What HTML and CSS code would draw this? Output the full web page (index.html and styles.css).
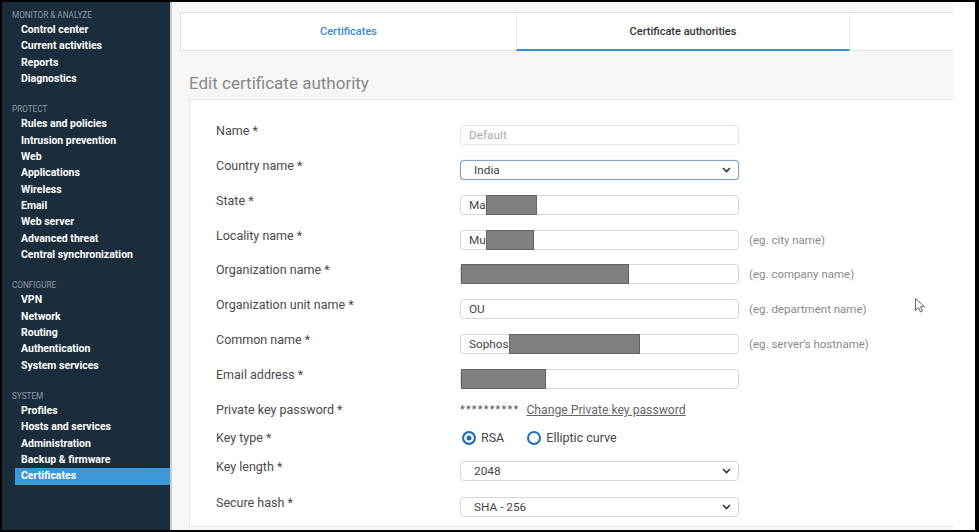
FILE: index.html
```html
<!DOCTYPE html>
<html lang="en">
<head>
<meta charset="utf-8">
<title>Edit certificate authority</title>
<link rel="stylesheet" href="styles.css">
</head>
<body>
<div class="frame">
  <aside class="sidebar">
    <div class="group">
      <div class="group-title">Monitor &amp; Analyze</div>
      <a class="nav-item">Control center</a>
      <a class="nav-item">Current activities</a>
      <a class="nav-item">Reports</a>
      <a class="nav-item">Diagnostics</a>
    </div>
    <div class="group">
      <div class="group-title">Protect</div>
      <a class="nav-item">Rules and policies</a>
      <a class="nav-item">Intrusion prevention</a>
      <a class="nav-item">Web</a>
      <a class="nav-item">Applications</a>
      <a class="nav-item">Wireless</a>
      <a class="nav-item">Email</a>
      <a class="nav-item">Web server</a>
      <a class="nav-item">Advanced threat</a>
      <a class="nav-item">Central synchronization</a>
    </div>
    <div class="group">
      <div class="group-title">Configure</div>
      <a class="nav-item">VPN</a>
      <a class="nav-item">Network</a>
      <a class="nav-item">Routing</a>
      <a class="nav-item">Authentication</a>
      <a class="nav-item">System services</a>
    </div>
    <div class="group">
      <div class="group-title">System</div>
      <a class="nav-item">Profiles</a>
      <a class="nav-item">Hosts and services</a>
      <a class="nav-item">Administration</a>
      <a class="nav-item">Backup &amp; firmware</a>
      <a class="nav-item active">Certificates</a>
    </div>
  </aside>

  <main class="main">
    <nav class="tabs">
      <div class="tab">Certificates</div>
      <div class="tab active">Certificate authorities</div>
      <div class="tab-fill"></div>
    </nav>
    <h1 class="title">Edit certificate authority</h1>
    <section class="panel">
      <div class="row">
        <div class="label">Name *</div>
        <div class="field disabled">Default</div>
      </div>
      <div class="row">
        <div class="label">Country name *</div>
        <div class="field select focus"><span>India</span><svg class="chev" width="9" height="6" viewBox="0 0 9 6"><path d="M1 1l3.5 3.5L8 1" fill="none" stroke="#333" stroke-width="1.6"/></svg></div>
      </div>
      <div class="row">
        <div class="label">State *</div>
        <div class="field"><span>Ma</span><span class="redact" style="width:51px"></span></div>
      </div>
      <div class="row">
        <div class="label">Locality name *</div>
        <div class="field"><span>Mu</span><span class="redact" style="width:48px"></span></div>
        <div class="hint">(eg. city name)</div>
      </div>
      <div class="row">
        <div class="label">Organization name *</div>
        <div class="field flush"><span class="redact" style="width:168px"></span></div>
        <div class="hint">(eg. company name)</div>
      </div>
      <div class="row">
        <div class="label">Organization unit name *</div>
        <div class="field">OU</div>
        <div class="hint">(eg. department name)</div>
      </div>
      <div class="row">
        <div class="label">Common name *</div>
        <div class="field"><span>Sophos</span><span class="redact" style="width:131px"></span></div>
        <div class="hint">(eg. server’s hostname)</div>
      </div>
      <div class="row gap-s">
        <div class="label">Email address *</div>
        <div class="field flush"><span class="redact" style="width:85px"></span></div>
      </div>
      <div class="row text-row gap-xs">
        <div class="label">Private key password *</div>
        <span class="stars">**********</span>
        <a class="link">Change Private key password</a>
      </div>
      <div class="row text-row gap-m">
        <div class="label">Key type *</div>
        <label class="radio"><span class="dot checked"></span>RSA</label>
        <label class="radio"><span class="dot"></span>Elliptic curve</label>
      </div>
      <div class="row gap-l">
        <div class="label">Key length *</div>
        <div class="field select"><span>2048</span><svg class="chev" width="9" height="6" viewBox="0 0 9 6"><path d="M1 1l3.5 3.5L8 1" fill="none" stroke="#333" stroke-width="1.6"/></svg></div>
      </div>
      <div class="row">
        <div class="label">Secure hash *</div>
        <div class="field select"><span>SHA - 256</span><svg class="chev" width="9" height="6" viewBox="0 0 9 6"><path d="M1 1l3.5 3.5L8 1" fill="none" stroke="#333" stroke-width="1.6"/></svg></div>
      </div>
    </section>
  </main>

  <div class="edge"></div>

  <svg class="cursor" width="10" height="15" viewBox="0 0 10 15"><path d="M0.5 0.5v12l3-3 2 4.5 2-1-2-4.3h4z" fill="#fff" stroke="#666" stroke-width="1"/></svg>
</div>
</body>
</html>
```

FILE: styles.css
```css
* { box-sizing: border-box; }

body {
  margin: 0;
  background: #000;
  font-family: Roboto, "Liberation Sans", Arial, sans-serif;
}

.frame {
  position: relative;
  display: flex;
  width: 973px;
  height: 528px;
  margin: 2px 4px 2px 2px;
  overflow: hidden;
  background: #fff;
}

/* Sidebar */
.sidebar {
  flex: none;
  width: 170px;
  padding-top: 6px;
  background: #1b2d3b;
  border-right: 2px solid #c7ced3;
}

.group { margin-bottom: 15px; }

.group-title {
  padding-left: 10px;
  font-size: 8.2px;
  line-height: 14px;
  color: #8e9ba5;
  text-transform: uppercase;
}

.nav-item {
  display: block;
  margin-left: 13px;
  padding-left: 6px;
  font-size: 10.5px;
  font-weight: 700;
  line-height: 16.33px;
  color: #fff;
}

.nav-item.active { background: #3d98d8; }

/* Main column */
.main {
  flex: none;
  width: 781px;
  display: flex;
  flex-direction: column;
  padding-top: 10px;
  background: #f7f7f7;
}

.tabs {
  flex: none;
  display: flex;
  height: 39px;
  margin-left: 8px;
  background: #fff;
  border: 1px solid #e3e3e3;
  border-right: none;
}

.tab {
  display: flex;
  align-items: center;
  justify-content: center;
  width: 335px;
  font-size: 11px;
  font-weight: 500;
  color: #3a89cf;
}

.tab.active {
  width: 334px;
  color: #333;
  border-left: 1px solid #eaeaea;
  border-right: 1px solid #eaeaea;
  border-bottom: 2px solid #3b8fd0;
  margin-bottom: -1px;
}

.tab-fill { flex: 1; }

.title {
  flex: none;
  margin: 20px 0 4px 17px;
  font-size: 17px;
  font-weight: 400;
  line-height: 24px;
  color: #888;
}

.panel {
  flex: 1;
  min-height: 0;
  overflow: hidden;
  margin: 0 0 3px 17px;
  padding: 25px 0 0 26px;
  background: #fff;
  border: 1px solid #e6e6e6;
  border-right: none;
}

/* Form rows */
.row {
  display: flex;
  align-items: flex-start;
  margin-bottom: 14.85px;
}

.row.gap-s { margin-bottom: 11px; }
.row.gap-xs { margin-bottom: 8px; }
.row.gap-m { margin-bottom: 13px; }
.row.gap-l { margin-bottom: 16px; }

.row.text-row {
  align-items: center;
  height: 20px;
}

.label {
  flex: none;
  width: 244px;
  font-size: 12.5px;
  line-height: 12px;
  color: #4a4a4a;
}

.text-row .label { line-height: 20px; }

.field {
  flex: none;
  display: flex;
  align-items: center;
  width: 279px;
  height: 20px;
  padding-left: 8px;
  background: #fff;
  border: 1px solid #d6d6d6;
  border-radius: 4px;
  font-size: 11.8px;
  color: #444;
}

.field.flush { padding-left: 0; }

.field.disabled {
  border-color: #e6e6e6;
  color: #aaa;
}

.field.select {
  justify-content: space-between;
  padding: 0 7px 0 13px;
}

.field.focus {
  border-color: #79a6c8;
  box-shadow: 0 0 1px #79a6c8;
}

.redact {
  align-self: stretch;
  margin: -1px 0;
  background: #808080;
  border: 1px solid #646464;
}

.hint {
  margin-left: 10px;
  font-size: 11.5px;
  line-height: 20px;
  color: #8a8a8a;
}

.stars {
  font-size: 11px;
  color: #555;
  letter-spacing: 1.2px;
}

.link {
  margin-left: 7px;
  font-size: 12.2px;
  color: #666;
  text-decoration: underline;
}

.radio {
  display: inline-flex;
  align-items: center;
  gap: 5px;
  margin-left: 2px;
  margin-right: 21px;
  font-size: 12.5px;
  color: #444;
}

.dot {
  width: 14px;
  height: 14px;
  border: 2px solid #1d6fb3;
  border-radius: 50%;
  background: #fff;
}

.dot.checked {
  background: #1d6fb3;
  box-shadow: inset 0 0 0 2.5px #fff;
}

.edge {
  flex: 1;
  background: #fff;
}

.cursor {
  position: absolute;
  left: 913px;
  top: 296px;
}
```
